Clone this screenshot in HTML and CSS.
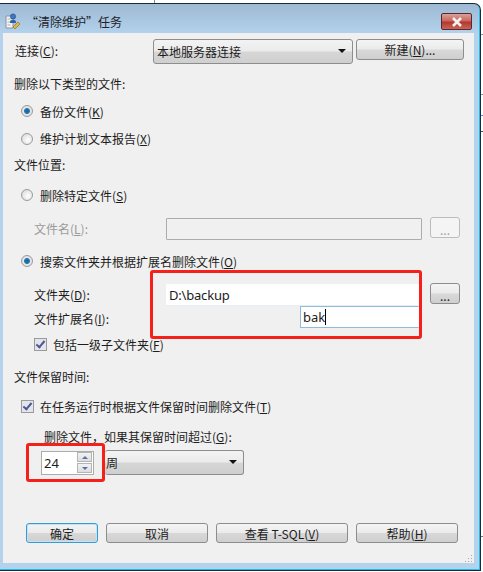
FILE: index.html
```html
<!DOCTYPE html>
<html lang="zh-CN">
<head>
  <meta charset="UTF-8" />
  <title>“清除维护”任务</title>
  <link rel="stylesheet" href="styles.css">
</head>
<body>
  <div class="window">
    <div class="titlebar">
      <svg class="app-icon" width="16" height="16" viewBox="0 0 16 16">
        <path d="M1 3h7v12H1z" fill="#f4f4f4" stroke="#8a94a0"/>
        <path d="M2.5 6h4M2.5 9h3M2.5 12h3" stroke="#a9b3bd"/>
        <circle cx="8" cy="3.5" r="2.6" fill="#3a78c8" stroke="#22406c" stroke-width=".6"/>
        <path d="M5 9c0-3 6-3 6 0v1H5z" fill="#2f62a8"/>
        <path d="M8 14l5-5 2 2-5 5z" fill="#e0b63c" stroke="#8a6a14" stroke-width=".6"/>
      </svg>
      <span class="title-text">“清除维护”任务</span>
      <div class="close-btn">
        <svg width="14" height="10" viewBox="0 0 14 10">
          <path d="M3 1l8 8M11 1L3 9" stroke="#f4f1f1" stroke-width="2.6"/>
        </svg>
      </div>
    </div>

    <div class="content">
      <div class="row r-conn">
        <span class="conn-label">连接(<u>C</u>):</span>
        <div class="combo conn-combo"><span>本地服务器连接</span><i class="arrow"></i></div>
        <div class="btn new-btn">新建(<u>N</u>)...</div>
      </div>

      <div class="row r-30 lift">删除以下类型的文件:</div>
      <div class="row r-26 lift indent"><i class="radio on"></i>备份文件(<u>K</u>)</div>
      <div class="row r-27 indent"><i class="radio"></i>维护计划文本报告(<u>X</u>)</div>
      <div class="row r-26 lift">文件位置:</div>
      <div class="row r-36 lift indent"><i class="radio"></i>删除特定文件(<u>S</u>)</div>

      <div class="row r-30 sub disabled">
        <span class="field-label">文件名(<u>L</u>):</span>
        <div class="input file-input"></div>
        <div class="btn dots dots-off">...</div>
      </div>

      <div class="row r-34 indent"><i class="radio on"></i>搜索文件夹并根据扩展名删除文件(<u>O</u>)</div>

      <div class="row r-22 sub folder-row">
        <span class="field-label">文件夹(<u>D</u>):</span>
        <div class="input plain folder-input">D:\backup</div>
        <div class="btn dots">...</div>
      </div>
      <div class="row r-22 sub ext-row">
        <span class="field-label">文件扩展名(<u>I</u>):</span>
        <div class="input plain ext-input"><span class="caret">bak</span></div>
      </div>

      <div class="row r-32 sub"><i class="check"></i>包括一级子文件夹(<u>F</u>)</div>
      <div class="row r-32">文件保留时间:</div>
      <div class="row r-28 indent"><i class="check"></i>在任务运行时根据文件保留时间删除文件(<u>T</u>)</div>
      <div class="row r-30 age-label">删除文件，如果其保留时间超过(<u>G</u>):</div>

      <div class="row r-25 age-row">
        <div class="spinner">
          <span class="spin-value">24</span>
          <div class="spin-btns">
            <div class="spin-btn"><i class="up"></i></div>
            <div class="spin-btn"><i class="down"></i></div>
          </div>
        </div>
        <div class="combo unit-combo"><span>周</span><i class="arrow"></i></div>
      </div>

      <div class="actions">
        <div class="btn ok-btn">确定</div>
        <div class="btn cancel-btn">取消</div>
        <div class="btn sql-btn">查看 T-SQL(<u>V</u>)</div>
        <div class="btn help-btn">帮助(<u>H</u>)</div>
      </div>

      <svg class="grip" width="9" height="9" viewBox="0 0 9 9">
        <path d="M7 1h1v1H7zM4 4h1v1H4zM7 4h1v1H7zM1 7h1v1H1zM4 7h1v1H4zM7 7h1v1H7z" fill="#a8a8a8"/>
      </svg>
    </div>
  </div>

  <div class="mark mark-paths"></div>
  <div class="mark mark-age"></div>
</body>
</html>
```

FILE: styles.css
```css
html, body {
  margin: 0;
  padding: 0;
  height: 100%;
  overflow: hidden;
}
body {
  position: relative;
  font-family: "Noto Sans CJK SC", "Noto Sans", sans-serif;
  font-size: 12px;
  color: #1c1c1c;
  /* bits of the window behind the dialog */
  background:
    linear-gradient(#8c8c8c, #8c8c8c) 154px 0 / 1px 3px no-repeat,
    linear-gradient(#9a9a9a, #9a9a9a) 481px 34px / 2px 1px no-repeat,
    linear-gradient(#9a9a9a, #9a9a9a) 481px 94px / 2px 1px no-repeat,
    linear-gradient(#6f8fd0, #6f8fd0) 481px 115px / 2px 1px no-repeat,
    linear-gradient(#555, #555) 481px 131px / 2px 1px no-repeat,
    linear-gradient(#777, #777) 481px 536px / 2px 1px no-repeat,
    #fff;
}
.window {
  box-sizing: border-box;
  width: 481px;
  height: 568px;
  margin-top: 3px;
  border: solid #1a2a34;
  border-width: 1px 1px 1px 0;
  border-radius: 0 7px 0 0;
  padding: 0 6px 7px 3px;
  background: linear-gradient(to bottom, #9db9d3, #b5d2ec 30px, #b5d2ec);
  box-shadow: inset -1px -1px 0 #1fc0e8;
  display: flex;
  flex-direction: column;
}
.titlebar {
  height: 29px;
  flex: none;
  display: flex;
  align-items: center;
  position: relative;
}
.app-icon {
  margin: 5px 0 0 2px;
}
.title-text {
  margin: 5px 0 0 5px;
  font-size: 12px;
  color: #20242a;
}
.close-btn {
  position: absolute;
  right: 2px;
  top: 9px;
  box-sizing: border-box;
  width: 31px;
  height: 17px;
  border: 1px solid #5a2a2a;
  border-radius: 2px;
  background: linear-gradient(to bottom, #d9a19b, #c9675e 45%, #b5372c 55%, #c9655a);
  display: flex;
  align-items: center;
  justify-content: center;
}
.content {
  flex: 1;
  background: #f0f0f0;
  padding-left: 11px;
  position: relative;
}
.row {
  display: flex;
  align-items: center;
  white-space: nowrap;
  box-sizing: border-box;
}
.lift {
  padding-bottom: 2px;
}
u {
  text-underline-offset: 1px;
}
.r-22 { height: 22px; }
.r-25 { height: 25px; }
.r-26 { height: 26px; }
.r-27 { height: 27px; }
.r-28 { height: 28px; }
.r-30 { height: 30px; }
.r-32 { height: 32px; }
.r-34 { height: 34px; }
.r-36 { height: 36px; }
.indent { padding-left: 7px; }
.sub { padding-left: 20px; }

.r-conn {
  height: 36px;
}
.conn-label {
  width: 138px;
  margin-left: 1px;
  padding-bottom: 2px;
}
.combo {
  box-sizing: border-box;
  border: 1px solid #8d8d8d;
  border-radius: 3px;
  background: linear-gradient(to bottom, #f3f3f3, #ebebeb 48%, #d6d6d6 52%, #cfcfcf);
  display: flex;
  align-items: center;
  justify-content: space-between;
  padding: 0 2px 0 3px;
}
.arrow {
  width: 0;
  height: 0;
  margin-right: 4px;
  border: 4px solid transparent;
  border-top: 4px solid #111;
  border-bottom: 0;
}
.conn-combo {
  width: 200px;
  height: 25px;
}
.btn {
  box-sizing: border-box;
  border: 1px solid #8d8d8d;
  border-radius: 3px;
  background: linear-gradient(to bottom, #f4f4f4, #ebebeb 48%, #d8d8d8 52%, #cfcfcf);
  display: flex;
  align-items: center;
  justify-content: center;
  flex: none;
}
.new-btn {
  width: 108px;
  height: 21px;
  margin: -3px 0 0 3px;
}

.field-label {
  width: 132px;
  padding-bottom: 2px;
  flex: none;
}
.ext-row .field-label {
  padding: 3px 0 0;
}
.input {
  box-sizing: border-box;
  height: 22px;
  border: 1px solid #acacac;
  background: #f0f0f0;
  border-radius: 1px;
  display: flex;
  align-items: center;
  padding-left: 3px;
  font-family: "Noto Sans", sans-serif;
  font-size: 13px;
}
.file-input {
  width: 256px;
}
.disabled {
  color: #9a9a9a;
}
.dots {
  width: 30px;
  height: 21px;
  margin: -4px 0 0 8px;
  padding-bottom: 2px;
  align-items: flex-end;
  line-height: 11px;
}
.dots-off {
  background: #f4f4f4;
  border-color: #bcbcbc;
  color: #a0a0a0;
}
.plain {
  background: #fff;
  border: 0;
  border-bottom: 1px solid #e6eef6;
}
.folder-row {
  margin-top: 6px;
}
.folder-input {
  width: 253px;
  flex: none;
  letter-spacing: -0.2px;
}
.folder-row .dots {
  margin-left: 11px;
}
.ext-input {
  width: 119px;
  margin-left: 134px;
  border: 1px solid #8fbbdc;
  border-right: 0;
  padding-left: 2px;
}
.caret {
  border-right: 1px solid #000;
  line-height: 16px;
}

.radio {
  box-sizing: border-box;
  width: 12px;
  height: 12px;
  margin-right: 7px;
  border: 1px solid #9a9a9a;
  border-radius: 50%;
  background: radial-gradient(circle at 60% 60%, #fff, #d4d4d4);
  flex: none;
}
.radio.on {
  background: radial-gradient(circle, #0f5f9c 0, #2f7db6 2.6px, #e8e8e8 3.4px, #d8d8d8);
}
.check {
  box-sizing: border-box;
  width: 13px;
  height: 13px;
  margin-right: 6px;
  border: 1px solid #9a9a9a;
  background: #e4e4ec;
  position: relative;
  flex: none;
}
.check::after {
  content: "";
  position: absolute;
  left: 3px;
  top: 0;
  width: 3px;
  height: 7px;
  border: solid #4a5a90;
  border-width: 0 2px 2px 0;
  transform: rotate(40deg);
}

.age-label {
  padding-left: 30px;
  padding-top: 3px;
}
.age-row {
  padding-left: 27px;
}
.spinner {
  box-sizing: border-box;
  width: 53px;
  height: 24px;
  border: 1px solid #acacac;
  background: #fff;
  display: flex;
  align-items: center;
  justify-content: space-between;
  padding: 0 1px 0 2px;
}
.spin-value {
  font-family: "Noto Sans", sans-serif;
  font-size: 13px;
}
.spin-btns {
  display: flex;
  flex-direction: column;
  gap: 1px;
}
.spin-btn {
  box-sizing: border-box;
  width: 15px;
  height: 10px;
  border: 1px solid #b4b4b4;
  background: linear-gradient(to bottom, #f2f2f2, #dcdcdc);
  display: flex;
  align-items: center;
  justify-content: center;
}
.up, .down {
  width: 0;
  height: 0;
  border: 3px solid transparent;
}
.up {
  border-top: 0;
  border-bottom: 3px solid #5a6fb0;
}
.down {
  border-bottom: 0;
  border-top: 3px solid #5a6fb0;
}
.unit-combo {
  width: 139px;
  height: 25px;
  margin-left: 11px;
  margin-top: -1px;
  border-left: 0;
  padding-left: 1px;
}

.actions {
  display: flex;
  gap: 8px;
  margin: 48px 0 0 12px;
}
.actions .btn {
  height: 20px;
}
.ok-btn {
  width: 72px;
  border: 1px solid #3a9ad0;
  box-shadow: inset 0 0 0 1px #bfe6f8;
}
.cancel-btn { width: 102px; }
.sql-btn { width: 132px; }
.help-btn { width: 102px; }

.grip {
  position: absolute;
  right: 1px;
  bottom: 0;
}

.mark {
  position: absolute;
  box-sizing: border-box;
  border: 3px solid #f5201a;
  border-radius: 3px;
}
.mark-paths {
  left: 150px;
  top: 270px;
  width: 272px;
  height: 69px;
}
.mark-age {
  left: 26px;
  top: 443px;
  width: 79px;
  height: 39px;
}
```
